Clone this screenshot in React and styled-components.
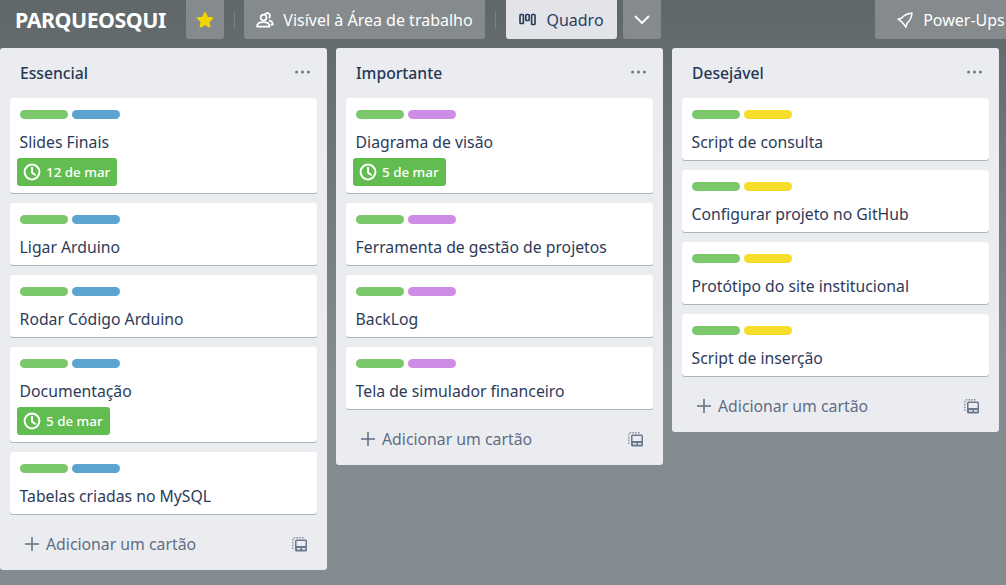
import React from "react";
import styled, { createGlobalStyle } from "styled-components";

const Global = createGlobalStyle`
  html, body { margin: 0; padding: 0; height: 100%; }
  body { font-family: "Noto Sans", "Open Sans", sans-serif; }
  #root { height: 100%; }
`;
const Page = styled.div`
  width: 1006px; height: 585px; overflow: hidden; box-sizing: border-box;
  background: linear-gradient(180deg, #5f6769 0%, #848b90 62%, #858c91 100%);
`;
const Header = styled.header`
  display: flex; align-items: center; height: 39px; margin-bottom: 9px; padding-left: 15px; width: 1100px;
`;
const BoardTitle = styled.h1`
  margin: 0 20px 0 0; width: 151px; font-size: 21.4px; font-weight: 700; color: #fff; letter-spacing: -0.5px; white-space: nowrap;
`;
const HeadBtn = styled.div`
  display: flex; align-items: center; justify-content: center; box-sizing: border-box; height: 39px;
  border-radius: 0 0 3px 3px; font-size: 16px; white-space: nowrap; gap: ${p => p.$gap ?? 10}px;
  width: ${p => p.$w}px; margin-left: ${p => p.$ml || 0}px;
  background: ${p => p.$light ? "#e2e4e9" : "#858a8d"};
  color: ${p => p.$light ? "#2c3e60" : "#fff"};
`;
const Divider = styled.span`
  width: 1px; height: 18px; background: #7b8285; margin: 0 ${p => p.$after}px 0 10px;
`;
const Board = styled.main`
  display: flex; align-items: flex-start; gap: 9px;
`;
const List = styled.section`
  width: 327px; flex: none; box-sizing: border-box; background: #ebecf0; border-radius: 3px; padding: 0 10px;
`;
const ListHead = styled.div`
  display: flex; align-items: center; justify-content: space-between; height: 50px; padding: 0 7px 0 10px;
`;
const ListTitle = styled.h2`
  margin: 0; font-size: 15.7px; font-weight: 500; color: #253858;
`;
const Dots = styled.svg`
  width: 15px; height: 4px; display: block; margin-top: -3px;
`;
const Cards = styled.div`
  display: flex; flex-direction: column; gap: 10px;
`;
const Card = styled.article`
  background: #fff; border-radius: 3px; box-shadow: 0 1px 0 rgba(9,30,66,.28); padding: 12px 9.6px 0;
  min-height: 62px; box-sizing: border-box; padding-bottom: ${p => p.$due ? 7 : 0}px;
`;
const Labels = styled.div`
  display: flex; gap: 4px; margin-left: .4px;
`;
const Label = styled.span`
  width: 48px; height: 9px; border-radius: 4.5px; background: ${p => p.$c};
`;
const CardTitle = styled.div`
  font-size: 15.75px; line-height: 22px; color: #2c3a5a; margin-top: 12px;
`;
const Due = styled.div`
  display: inline-flex; align-items: center; gap: 5px; height: 28px; box-sizing: border-box; margin: 5px 0 0 -2.6px; padding: 0 7px 0 6px;
  background: #61bd4f; color: #fff; border-radius: 3px; font-size: 13.4px; font-weight: 500;
  vertical-align: top;
`;
const Footer = styled.div`
  display: flex; align-items: center; height: 56px; box-sizing: border-box; padding: 4px 10px 0 13.5px; color: #5e6c84; font-size: 15.8px; gap: 6.5px;
`;
const AddText = styled.span`
  flex: 1;
`;

const Star = () => (
  <svg width="20" height="20" viewBox="0 0 20 20"><path fill="#f2d600" stroke="#f2d600" strokeWidth="1.5" strokeLinejoin="round" d="M10 2.6l2.3 4.8 5.2.7-3.8 3.6.9 5.2L10 14.4l-4.6 2.5.9-5.2-3.8-3.6 5.2-.7z" /></svg>
);
const People = () => (
  <svg width="18" height="16" viewBox="0 0 18 16" fill="none" stroke="#fff" strokeWidth="1.7" strokeLinejoin="round">
    <circle cx="7.6" cy="5.6" r="2.9" />
    <path d="M1 14.6c0-3 2.4-4.4 6.4-4.4s6.3 1.4 6.3 4.4z" />
    <path d="M8.8 2.4c1-1.6 3.2-1.8 4.4-.5 1.1 1.2 1 3.2-.4 4.2" />
    <path d="M13 8.6c2.4.3 3.8 1.8 3.8 4h-2" />
  </svg>
);
const BoardIcon = () => (
  <svg width="17" height="13" viewBox="0 0 17 13" fill="none" stroke="#253858" strokeWidth="1.6">
    <rect x="1" y="1.5" width="3.4" height="9" rx=".8" />
    <rect x="6.8" y="1.5" width="3.4" height="6" rx=".8" />
    <rect x="12.6" y="1.5" width="3.4" height="10" rx=".8" />
  </svg>
);
const Chevron = () => (
  <svg width="18" height="18" viewBox="0 0 18 18" fill="none" stroke="#fff" strokeWidth="1.8" strokeLinecap="round" strokeLinejoin="round"><path d="M2.5 5.5L9 12l6.5-6.5" /></svg>
);
const Rocket = () => (
  <svg width="16" height="16" viewBox="0 0 16 16" fill="none" stroke="#fff" strokeWidth="1.5" strokeLinejoin="round">
    <path d="M15 1C10.6 1.6 6.8 3.4 4.4 6.2L1 7.2l3.4 2.4 2.4 2.6 2 3 1.2-4c2.8-2.2 4.6-5.8 5-10.2z" />
  </svg>
);
const Clock = () => (
  <svg width="18" height="18" viewBox="0 0 18 18" fill="none" stroke="#fff" strokeWidth="2" strokeLinecap="round" strokeLinejoin="round">
    <circle cx="9" cy="9" r="7.4" /><path d="M9 4.8V9.6l3 2.2" />
  </svg>
);
const Plus = () => (
  <svg width="16" height="16" viewBox="0 0 16 16" stroke="#5e6c84" strokeWidth="1.5" style={{ flex: "none" }}><path d="M8 1v14M1 8h14" /></svg>
);
const Template = () => (
  <svg width="15" height="15" viewBox="0 0 15 15" style={{ flex: "none" }}>
    <path fill="none" stroke="#8a94a6" strokeWidth="1.4" strokeDasharray="1.6 1.2" d="M.8 12V2.6C.8 1.5 1.5.8 2.6.8H12" />
    <rect x="3" y="2.5" width="12" height="12" rx="1.5" fill="#6b778c" />
    <rect x="4.5" y="4" width="9" height="5" fill="#ebecf0" />
    <rect x="5" y="11" width="3.4" height="1.6" fill="#ebecf0" />
    <rect x="10" y="11" width="3.4" height="1.6" fill="#ebecf0" />
  </svg>
);

const G = "#7bc86c";
const lists = [
  { title: "Essencial", c: "#5ba4cf", cards: [
    { t: "Slides Finais", d: "12 de mar" }, { t: "Ligar Arduino" }, { t: "Rodar Código Arduino" },
    { t: "Documentação", d: "5 de mar" }, { t: "Tabelas criadas no MySQL" } ] },
  { title: "Importante", c: "#cd8de5", cards: [
    { t: "Diagrama de visão", d: "5 de mar" }, { t: "Ferramenta de gestão de projetos" }, { t: "BackLog" }, { t: "Tela de simulador financeiro" } ] },
  { title: "Desejável", c: "#f5dd29", cards: [
    { t: "Script de consulta" }, { t: "Configurar projeto no GitHub" }, { t: "Protótipo do site institucional" }, { t: "Script de inserção" } ] },
];

export default function App() {
  return (
    <Page>
      <Global />
      <Header>
        <BoardTitle>PARQUEOSQUI</BoardTitle>
        <HeadBtn $w={38}><Star /></HeadBtn>
        <Divider $after={9} />
        <HeadBtn $w={241} $gap={9}><People />Visível à Área de trabalho</HeadBtn>
        <Divider $after={10} />
        <HeadBtn $w={111} $light><BoardIcon />Quadro</HeadBtn>
        <HeadBtn $w={38} $ml={6}><Chevron /></HeadBtn>
        <HeadBtn $w={152} $ml={214}><Rocket />Power-Ups</HeadBtn>
      </Header>
      <Board>
        {lists.map(l => (
          <List key={l.title}>
            <ListHead>
              <ListTitle>{l.title}</ListTitle>
              <Dots viewBox="0 0 15 4"><g fill="#6b778c"><circle cx="1.6" cy="2" r="1.5" /><circle cx="7.5" cy="2" r="1.5" /><circle cx="13.4" cy="2" r="1.5" /></g></Dots>
            </ListHead>
            <Cards>
              {l.cards.map(c => (
                <Card key={c.t} $due={!!c.d}>
                  <Labels><Label $c={G} /><Label $c={l.c} /></Labels>
                  <CardTitle>{c.t}</CardTitle>
                  {c.d && <Due><Clock />{c.d}</Due>}
                </Card>
              ))}
            </Cards>
            <Footer><Plus /><AddText>Adicionar um cartão</AddText><Template /></Footer>
          </List>
        ))}
      </Board>
    </Page>
  );
}
